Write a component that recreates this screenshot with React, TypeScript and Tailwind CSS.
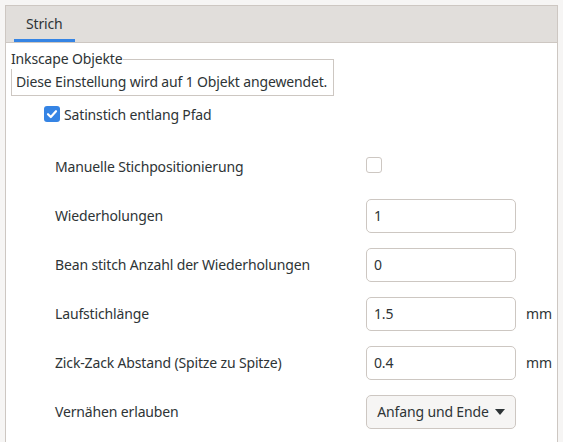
import React from "react";

const rows = [
  { label: "Wiederholungen", value: "1", unit: "" },
  { label: "Bean stitch Anzahl der Wiederholungen", value: "0", unit: "" },
  { label: "Laufstichlänge", value: "1.5", unit: "mm" },
  { label: "Zick-Zack Abstand (Spitze zu Spitze)", value: "0.4", unit: "mm" },
];

const Row = ({ label, children }: { label: string; children: React.ReactNode }) => (
  <div className="flex items-center h-[49px]">
    <div className="w-[355px] pl-[44px] whitespace-nowrap">{label}</div>
    {children}
  </div>
);

const App = () => {
  return (
    <div
      className="w-[563px] h-[442px] overflow-hidden bg-[#f6f5f4] px-[5px] pt-[5px] text-[14px] tracking-[-0.15px] text-[#2e3436]"
      style={{ fontFamily: '"Noto Sans", sans-serif' }}
    >
      <div className="h-full border-l border-t border-r border-[#cdc7c2] bg-white">
        <div className="h-[37px] bg-[#e1dedb] border-b border-[#cdc7c2] flex items-end pl-[8px]">
          <div className="px-[12px] h-full flex flex-col justify-center relative">
            <span className="mt-[-2px]">Strich</span>
            <div className="absolute left-0 right-0 bottom-0 h-[3px] bg-[#3584e4]" />
          </div>
        </div>

        <div className="pl-[5px]">
          <div className="relative mt-[16px] w-[323px] h-[37px] border border-[#cdc7c2] pt-[8px] flex items-center pl-[4px] whitespace-nowrap">
            <div className="absolute left-[-1px] top-[-11px] leading-[20px] bg-white pr-[1px]">
              Inkscape Objekte
            </div>
            Diese Einstellung wird auf 1 Objekt angewendet.
          </div>

          <div className="flex items-center mt-[10px] pl-[33px] h-[16px]">
            <div className="w-[16px] h-[16px] rounded-[3px] bg-[#3584e4] flex items-center justify-center">
              <svg width="12" height="12" viewBox="0 0 12 12">
                <path d="M2 6.2 L4.8 9 L10 3.2" stroke="white" strokeWidth="2.2" fill="none" strokeLinecap="round" strokeLinejoin="round" />
              </svg>
            </div>
            <span className="ml-[4px]">Satinstich entlang Pfad</span>
          </div>

          <div className="mt-[20px]">
            <Row label="Manuelle Stichpositionierung">
              <div className="w-[16px] h-[16px] rounded-[3px] border border-[#cdc7c2] bg-white mt-[-3px]" />
            </Row>
            {rows.map((r) => (
              <Row key={r.label} label={r.label}>
                <div className="w-[150px] h-[34px] rounded-[5px] border border-[#cdc7c2] bg-white flex items-center pl-[7px]">
                  {r.value}
                </div>
                {r.unit && <span className="ml-[10px]">{r.unit}</span>}
              </Row>
            ))}
            <Row label="Vernähen erlauben">
              <div className="w-[150px] h-[34px] rounded-[5px] border border-[#cdc7c2] bg-[#f6f5f4] flex items-center justify-center gap-[6px]">
                <span>Anfang und Ende</span>
                <svg width="10" height="6" viewBox="0 0 10 6">
                  <path d="M0 0 L10 0 L5 6 Z" fill="#2e3436" />
                </svg>
              </div>
            </Row>
          </div>
        </div>
      </div>
    </div>
  );
};

export default App;
